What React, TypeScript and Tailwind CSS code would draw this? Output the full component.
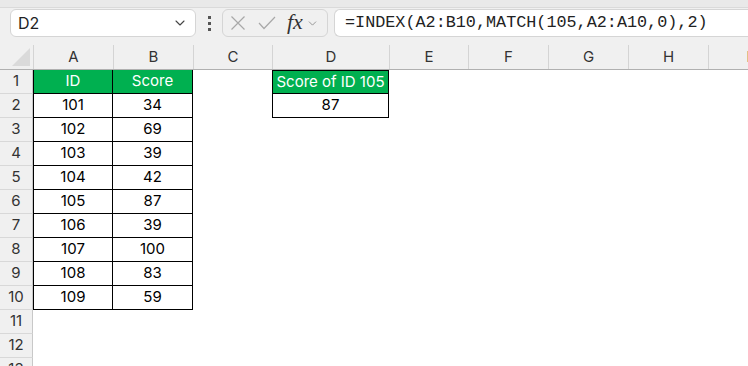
import { ChevronDown } from "lucide-react"

const cols = ["A", "B", "C", "D", "E", "F", "G", "H", "I"]
const widths = [80, 80, 79, 117, 79, 80, 80, 80, 80]

const data: [string, string][] = [
  ["101", "34"],
  ["102", "69"],
  ["103", "39"],
  ["104", "42"],
  ["105", "87"],
  ["106", "39"],
  ["107", "100"],
  ["108", "83"],
  ["109", "59"],
]

const cellFont = { fontFamily: "Inter, 'Noto Sans', 'Liberation Sans', sans-serif" }

function Toolbar() {
  return (
    <div className="bg-[#f0f0f0]">
      <div className="h-2 bg-[#e9e9e9] border-b border-[#dadada]" />
      <div className="flex items-start h-[37px] pt-[1px]">
        {/* name box */}
        <div className="ml-[10px] w-[186px] h-[28px] bg-white border border-[#d5d5d5] rounded-md flex items-center justify-between pl-[7px] pr-[7px]">
          <span className="text-[16px] text-[#222]" style={cellFont}>D2</span>
          <ChevronDown className="w-4 h-4 text-[#444]" strokeWidth={1.6} />
        </div>
        <div className="w-[26px] h-[28px] flex flex-col items-center justify-center gap-[3px]">
          <div className="w-[3px] h-[3px] bg-[#555]" />
          <div className="w-[3px] h-[3px] bg-[#555]" />
          <div className="w-[3px] h-[3px] bg-[#555]" />
        </div>
        {/* formula buttons */}
        <div className="w-[106px] h-[28px] border border-[#d5d5d5] rounded-md flex items-center pl-[7px]">
          <svg width="16" height="16" viewBox="0 0 16 16" className="mr-[12px]">
            <path d="M1.5 1.5 L14.5 14.5 M14.5 1.5 L1.5 14.5" stroke="#a8a8a8" strokeWidth="1.2" fill="none" />
          </svg>
          <svg width="18" height="14" viewBox="0 0 18 14" className="mr-[11px]">
            <path d="M1 7 L6 12.5 L17 1" stroke="#a8a8a8" strokeWidth="1.2" fill="none" />
          </svg>
          <span className="text-[22px] italic text-[#333] leading-none -mt-[3px]" style={{ fontFamily: "'Liberation Serif', 'DejaVu Serif', serif" }}>
            fx
          </span>
          <ChevronDown className="w-[13px] h-[13px] text-[#8a8a8a] ml-[3px]" strokeWidth={1.6} />
        </div>
        {/* formula input */}
        <div className="ml-[6px] flex-1 h-[28px] bg-white border border-[#d5d5d5] border-r-0 rounded-l-md flex items-center pl-[10px]">
          <span className="text-[16.8px] text-[#222] whitespace-nowrap" style={{ fontFamily: "'Liberation Mono', 'DejaVu Sans Mono', monospace" }}>
            =INDEX(A2:B10,MATCH(105,A2:A10,0),2)
          </span>
        </div>
      </div>
    </div>
  )
}

function Cell({ r, c }: { r: number; c: number }) {
  const w = widths[c]
  let text = ""
  let cls = "bg-white"
  if (c <= 1 && r <= 10) {
    text = r === 1 ? (c === 0 ? "ID" : "Score") : data[r - 2][c]
    cls = r === 1 ? "bg-[#00b050] text-white" : "bg-white text-black"
    cls += " border-b border-r border-black"
    if (c === 0) cls += " border-l"
  }
  if (c === 3 && r <= 2) {
    text = r === 1 ? "Score of ID 105" : "87"
    cls = (r === 1 ? "bg-[#00b050] text-white" : "bg-white text-black") + " border border-black"
    if (r === 2) cls += " border-t-0"
  }
  return (
    <div
      className={`h-6 shrink-0 flex items-center justify-center text-[15px] whitespace-nowrap ${cls}`}
      style={{ width: w, ...cellFont }}
    >
      {text}
    </div>
  )
}

export default function App() {
  const rows = Array.from({ length: 13 }, (_, i) => i + 1)
  return (
    <div className="w-[748px] h-[366px] overflow-hidden bg-white">
      <Toolbar />
      {/* column headers */}
      <div className="flex h-[25px] bg-[#f0f0f0] border-b border-[#b0b0b0]">
        <div className="w-[33px] shrink-0 relative">
          <div className="absolute right-[3px] bottom-[3px] w-0 h-0 border-l-[18px] border-l-transparent border-b-[18px] border-b-[#dadada]" />
        </div>
        {cols.map((c, i) => (
          <div
            key={c}
            className="shrink-0 flex items-center justify-center text-[15px] text-[#333] border-l border-[#d4d4d4]"
            style={{ width: widths[i], ...cellFont }}
          >
            {c}
          </div>
        ))}
      </div>
      {rows.map((r) => (
        <div key={r} className="flex">
          <div
            className="w-[33px] h-6 shrink-0 bg-[#f0f0f0] border-b border-[#d8d8d8] border-r border-r-[#c8c8c8] flex items-center justify-center text-[15px] text-[#333]"
            style={cellFont}
          >
            {r}
          </div>
          {cols.map((_, c) => (
            <Cell key={c} r={r} c={c} />
          ))}
        </div>
      ))}
    </div>
  )
}
